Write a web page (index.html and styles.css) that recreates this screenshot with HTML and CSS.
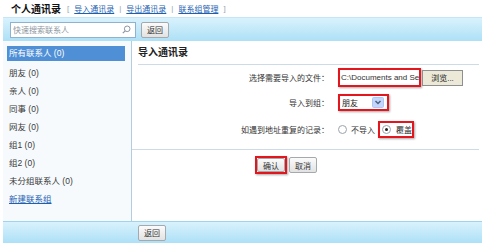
FILE: index.html
```html
<!DOCTYPE html>
<html lang="zh-CN">
<head>
  <meta charset="UTF-8">
  <title>个人通讯录</title>
  <link rel="stylesheet" href="styles.css">
</head>
<body>
<div class="page">
  <div class="title-row">
    <b class="title">个人通讯录</b>
    <span class="sep">[</span>
    <a href="#">导入通讯录</a>
    <span class="sep">|</span>
    <a href="#">导出通讯录</a>
    <span class="sep">|</span>
    <a href="#">联系组管理</a>
    <span class="sep">]</span>
  </div>

  <div class="toolbar">
    <div class="search">
      <span class="placeholder">快速搜索联系人</span>
      <svg class="search-icon" width="9" height="9" viewBox="0 0 9 9">
        <circle cx="5.2" cy="3.8" r="2.8" fill="none" stroke="#8a96a3" stroke-width="1"/>
        <line x1="3.2" y1="5.8" x2="0.8" y2="8.2" stroke="#8a96a3" stroke-width="1.2"/>
      </svg>
    </div>
    <button class="btn">返回</button>
  </div>

  <div class="main">
    <div class="sidebar">
      <div class="item selected">所有联系人 (0)</div>
      <div class="item">朋友 (0)</div>
      <div class="item">亲人 (0)</div>
      <div class="item">同事 (0)</div>
      <div class="item">网友 (0)</div>
      <div class="item">组1 (0)</div>
      <div class="item">组2 (0)</div>
      <div class="item">未分组联系人 (0)</div>
      <div class="item"><a href="#">新建联系组</a></div>
    </div>

    <div class="content">
      <div class="content-head">导入通讯录</div>

      <div class="form">
        <div class="label">选择需要导入的文件：</div>
        <div class="field">
          <div class="mark file-mark"><span class="file-input">C:\Documents and Se</span></div>
          <button class="browse">浏览...</button>
        </div>

        <div class="label">导入到组：</div>
        <div class="field">
          <div class="mark select-mark">
            <span class="select-text">朋友</span>
            <svg class="select-arrow" width="12" height="11" viewBox="0 0 12 11">
              <rect x="0.5" y="0.5" width="11" height="10" rx="1" fill="#c3d5fb" stroke="#b0c6f2"/>
              <path d="M3.5 4 L6 6.5 L8.5 4" fill="none" stroke="#4d6185" stroke-width="1.5"/>
            </svg>
          </div>
        </div>

        <div class="label">如遇到地址重复的记录：</div>
        <div class="field">
          <span class="radio"></span>
          <span class="radio-text">不导入</span>
          <div class="mark radio-mark">
            <span class="radio checked"></span>
            <span>覆盖</span>
          </div>
        </div>
      </div>

      <div class="actions">
        <div class="mark btn-mark"><button class="btn">确认</button></div>
        <button class="btn">取消</button>
      </div>
    </div>
  </div>

  <div class="toolbar footer">
    <button class="btn">返回</button>
  </div>
</div>
</body>
</html>
```

FILE: styles.css
```css
body { margin: 0; background: #fff; font-family: "Liberation Sans", "Noto Sans CJK SC", sans-serif; font-size: 8px; color: #333; }
.page { margin-left: 3px; width: 479px; }

.title-row { height: 17px; display: flex; align-items: center; gap: 4px; padding-left: 8px; }
.title { font-size: 10px; color: #111; margin-right: 1px; }
.title-row a { color: #1d5fb0; text-decoration: underline; }
.sep { color: #9aa4ad; margin: 0 1px; }

.toolbar {
  height: 24px;
  display: flex;
  align-items: center;
  gap: 5px;
  padding-left: 7px;
  background: linear-gradient(#d9f2fd, #ade0f6);
  border-top: 1px solid #c4e6f7;
  box-sizing: border-box;
}
.search {
  width: 126px;
  height: 16px;
  box-sizing: border-box;
  border: 1px solid #8fb3cf;
  background: #fff;
  display: flex;
  align-items: center;
  justify-content: space-between;
  padding: 0 4px 0 2px;
}
.placeholder { color: #8d96a0; }

.btn {
  font-family: "Liberation Sans", "Noto Sans CJK SC", sans-serif;
  font-size: 8px;
  color: #333;
  height: 16px;
  padding: 0 5px;
  border: 1px solid #a4a9ae;
  border-radius: 2px;
  background: linear-gradient(#fbfbfb, #e2e2e2);
}

.main { display: flex; height: 180px; }
.sidebar {
  width: 129px;
  box-sizing: border-box;
  background: #f7fafd;
  border-right: 1px solid #b3cce0;
  padding: 5px 6px 0 4px;
}
.item { height: 18px; line-height: 18px; padding-left: 2px; color: #3a3a3a; font-size: 8.5px; }
.item.selected { height: 15px; line-height: 15px; margin-bottom: 3px; background: #4f8fd6; color: #fff; }
.item a { color: #1d5fb0; text-decoration: underline; }

.content { flex: 1; padding: 0 3px 0 0; }
.content-head {
  margin-left: 6px;
  height: 23px;
  line-height: 23px;
  font-size: 10px;
  font-weight: bold;
  color: #222;
  border-bottom: 1px solid #cddbe8;
}

.form {
  display: grid;
  grid-template-columns: 197px auto;
  grid-template-rows: 25px 25px 28px;
  column-gap: 9px;
  align-items: center;
  border-bottom: 1px solid #cddbe8;
  padding-bottom: 6px;
}
.label { text-align: right; color: #333; }
.field { display: flex; align-items: center; }

.mark { border: 2px solid #e3161e; box-shadow: 1px 1px 2px rgba(0, 0, 0, 0.35); box-sizing: border-box; }
.file-mark { width: 83px; height: 19px; background: #fff; overflow: hidden; display: flex; align-items: center; }
.file-input { white-space: nowrap; padding-left: 1px; color: #333; }
.browse {
  font-family: "Liberation Sans", "Noto Sans CJK SC", sans-serif;
  font-size: 8px;
  height: 16px;
  width: 41px;
  margin-left: 1px;
  padding: 0;
  border: 1px solid #8e8f8f;
  background: #ece9d8;
  color: #222;
}
.select-mark { width: 51px; height: 17px; background: #fff; display: flex; align-items: center; justify-content: space-between; padding: 0 3px 0 2px; }
.select-text { color: #222; }

.radio { width: 7px; height: 7px; border: 1px solid #9aa3ab; border-radius: 50%; background: #fff; display: inline-block; position: relative; }
.radio.checked::after { content: ""; position: absolute; left: 2px; top: 2px; width: 3px; height: 3px; border-radius: 50%; background: #222; }
.radio-text { margin: 0 3px 0 4px; }
.radio-mark { height: 17px; width: 36px; display: flex; align-items: center; gap: 5px; padding-left: 2px; }

.actions { display: flex; align-items: center; gap: 2px; margin: 6px 0 0 123px; }
.btn-mark { padding: 0; }
.btn-mark .btn { display: block; height: 14px; }

.footer { height: 22px; padding-left: 135px; border-top: 1px solid #9fd3ee; }
```
